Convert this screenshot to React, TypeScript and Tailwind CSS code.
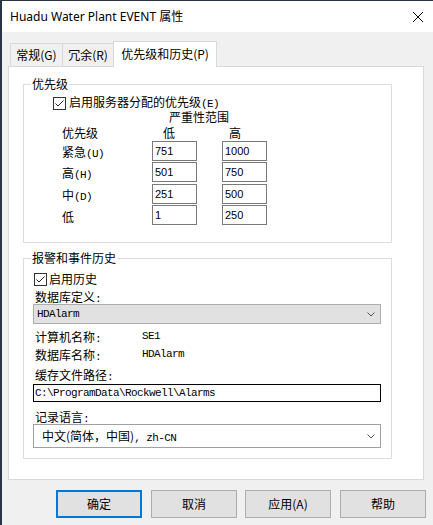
import React from 'react';

const cjk = "font-['Noto_Sans_CJK_SC',sans-serif] text-[12px] text-black";

function M({ children }: { children: React.ReactNode }) {
  return (
    <span className="font-['Liberation_Mono','Noto_Sans_CJK_SC',monospace] text-[11px] leading-[12px] tracking-[-0.6px]">
      {children}
    </span>
  );
}

function Check() {
  return (
    <svg width="13" height="13" viewBox="0 0 13 13" className="shrink-0">
      <rect x="0.5" y="0.5" width="12" height="12" fill="white" stroke="#333" />
      <path d="M2.5 6.5 L5 9 L10.5 3.5" fill="none" stroke="#222" strokeWidth="1" />
    </svg>
  );
}

function Chevron() {
  return (
    <svg width="8" height="5" viewBox="0 0 8 5" className="shrink-0">
      <path d="M0.5 0.5 L4 4 L7.5 0.5" fill="none" stroke="#555" strokeWidth="1" />
    </svg>
  );
}

function NumBox({ value }: { value: string }) {
  return (
    <div className="w-[45px] h-[20px] border border-[#7a7a7a] bg-white flex items-center pl-[2px] font-['Liberation_Sans',sans-serif] text-[11px] text-black">
      {value}
    </div>
  );
}

const rows = [
  { label: <>紧急<M>(U)</M></>, low: '751', high: '1000', mt: 'mt-[2px]' },
  { label: <>高<M>(H)</M></>, low: '501', high: '750', mt: 'mt-[1px]' },
  { label: <>中<M>(D)</M></>, low: '251', high: '500', mt: 'mt-[2px]' },
  { label: <>低</>, low: '1', high: '250', mt: 'mt-[1px]' },
];

export default function App() {
  return (
    <div className="w-[433px] h-[525px] bg-[#2b3445] flex overflow-hidden">
      <div className="ml-[2px] mt-[1px] flex-1 bg-[#f0f0f0] flex flex-col">
        {/* Title bar */}
        <div className="h-[31px] bg-white flex items-center justify-between pl-[8px] pr-[10px]">
          <span className="font-['Noto_Sans','Noto_Sans_CJK_SC',sans-serif] text-[12px] text-black">
            Huadu Water Plant EVENT 属性
          </span>
          <svg width="10" height="10" viewBox="0 0 10 10">
            <path d="M0 0 L10 10 M10 0 L0 10" stroke="#000" strokeWidth="1" />
          </svg>
        </div>

        {/* Tabs */}
        <div className={`ml-[6px] mt-[9px] h-[25px] flex items-end ${cjk}`}>
          <div className="ml-[2px] w-[53px] h-[23px] border border-b-0 border-[#d9d9d9] bg-[#f0f0f0] flex items-center justify-center">
            常规(G)
          </div>
          <div className="w-[51px] h-[23px] border-t border-r border-[#d9d9d9] bg-[#f0f0f0] flex items-center justify-center">
            冗余(R)
          </div>
          <div className="relative z-10 -ml-px -mb-px w-[104px] h-[26px] border border-b-0 border-[#d9d9d9] bg-white flex items-center justify-center pb-[2px]">
            优先级和历史(P)
          </div>
        </div>

        {/* Panel */}
        <div className={`ml-[6px] w-[416px] h-[414px] border border-[#d9d9d9] bg-white pl-[14px] pt-[9px] ${cjk}`}>
          <fieldset className="w-[369px] h-[167px] border border-[#dcdcdc] flex flex-col">
            <legend className="ml-[7px] px-[1px] leading-[16px]">优先级</legend>
            <div className="mt-[5px] h-[12px] flex items-center">
              <div className="ml-[29px]"><Check /></div>
              <span className="ml-[3px] leading-[12px]">启用服务器分配的优先级<M>(E)</M></span>
            </div>
            <div className="mt-[2px] h-[12px] leading-[12px] ml-[145px]">严重性范围</div>
            <div className="mt-[4px] h-[12px] leading-[12px] flex">
              <span className="ml-[38px] w-[101px]">优先级</span>
              <span className="w-[66px]">低</span>
              <span>高</span>
            </div>
            {rows.map((r, i) => (
              <div key={i} className={`${r.mt} h-[20px] flex items-center`}>
                <span className="ml-[38px] w-[90px] pt-[3px] leading-[14px]">{r.label}</span>
                <NumBox value={r.low} />
                <div className="ml-[25px]"><NumBox value={r.high} /></div>
              </div>
            ))}
          </fieldset>

          <fieldset className="mt-[7px] w-[369px] h-[209px] border border-[#dcdcdc] flex flex-col">
            <legend className="ml-[7px] px-[1px] leading-[16px]">报警和事件历史</legend>
            <div className="mt-[6px] h-[14px] flex items-center">
              <div className="ml-[10px]"><Check /></div>
              <span className="ml-[2px] leading-[14px]">启用历史</span>
            </div>
            <div className="mt-[4px] h-[14px] leading-[14px] ml-[11px]">数据库定义<M>:</M></div>
            <div className="ml-[9px] w-[348px] h-[20px] border border-[#adadad] bg-[#e1e1e1] flex items-center justify-between pl-[3px] pr-[5px]">
              <M>HDAlarm</M>
              <Chevron />
            </div>
            <div className="mt-[6px] h-[14px] leading-[14px] ml-[11px] flex">
              <span className="w-[107px]">计算机名称<M>:</M></span>
              <M>SE1</M>
            </div>
            <div className="mt-[4px] h-[14px] leading-[14px] ml-[11px] flex">
              <span className="w-[107px]">数据库名称<M>:</M></span>
              <M>HDAlarm</M>
            </div>
            <div className="mt-[6px] h-[14px] leading-[14px] ml-[11px]">缓存文件路径<M>:</M></div>
            <div className="mt-[2px] ml-[9px] w-[348px] h-[18px] border border-black bg-white flex items-center pl-[1px]">
              <M>C:\ProgramData\Rockwell\Alarms</M>
            </div>
            <div className="mt-[8px] h-[14px] leading-[14px] ml-[11px]">记录语言<M>:</M></div>
            <div className="ml-[9px] w-[348px] h-[24px] border border-[#a0a0a0] bg-white flex items-center justify-between pl-[8px] pr-[5px]">
              <span>中文(简体，中国)<M>, zh-CN</M></span>
              <Chevron />
            </div>
          </fieldset>
        </div>

        {/* Buttons */}
        <div className={`mt-[10px] ml-[54px] flex ${cjk}`}>
          <button className="w-[86px] h-[28px] border-2 border-[#0078d7] bg-[#e1e1e1] flex items-center justify-center">
            确定
          </button>
          <button className="ml-[9px] w-[86px] h-[28px] border border-[#adadad] bg-[#e1e1e1] flex items-center justify-center">
            取消
          </button>
          <button className="ml-[8px] w-[86px] h-[28px] border border-[#adadad] bg-[#e1e1e1] flex items-center justify-center">
            应用(A)
          </button>
          <button className="ml-[9px] w-[86px] h-[28px] border border-[#adadad] bg-[#e1e1e1] flex items-center justify-center">
            帮助
          </button>
        </div>
      </div>
    </div>
  );
}
